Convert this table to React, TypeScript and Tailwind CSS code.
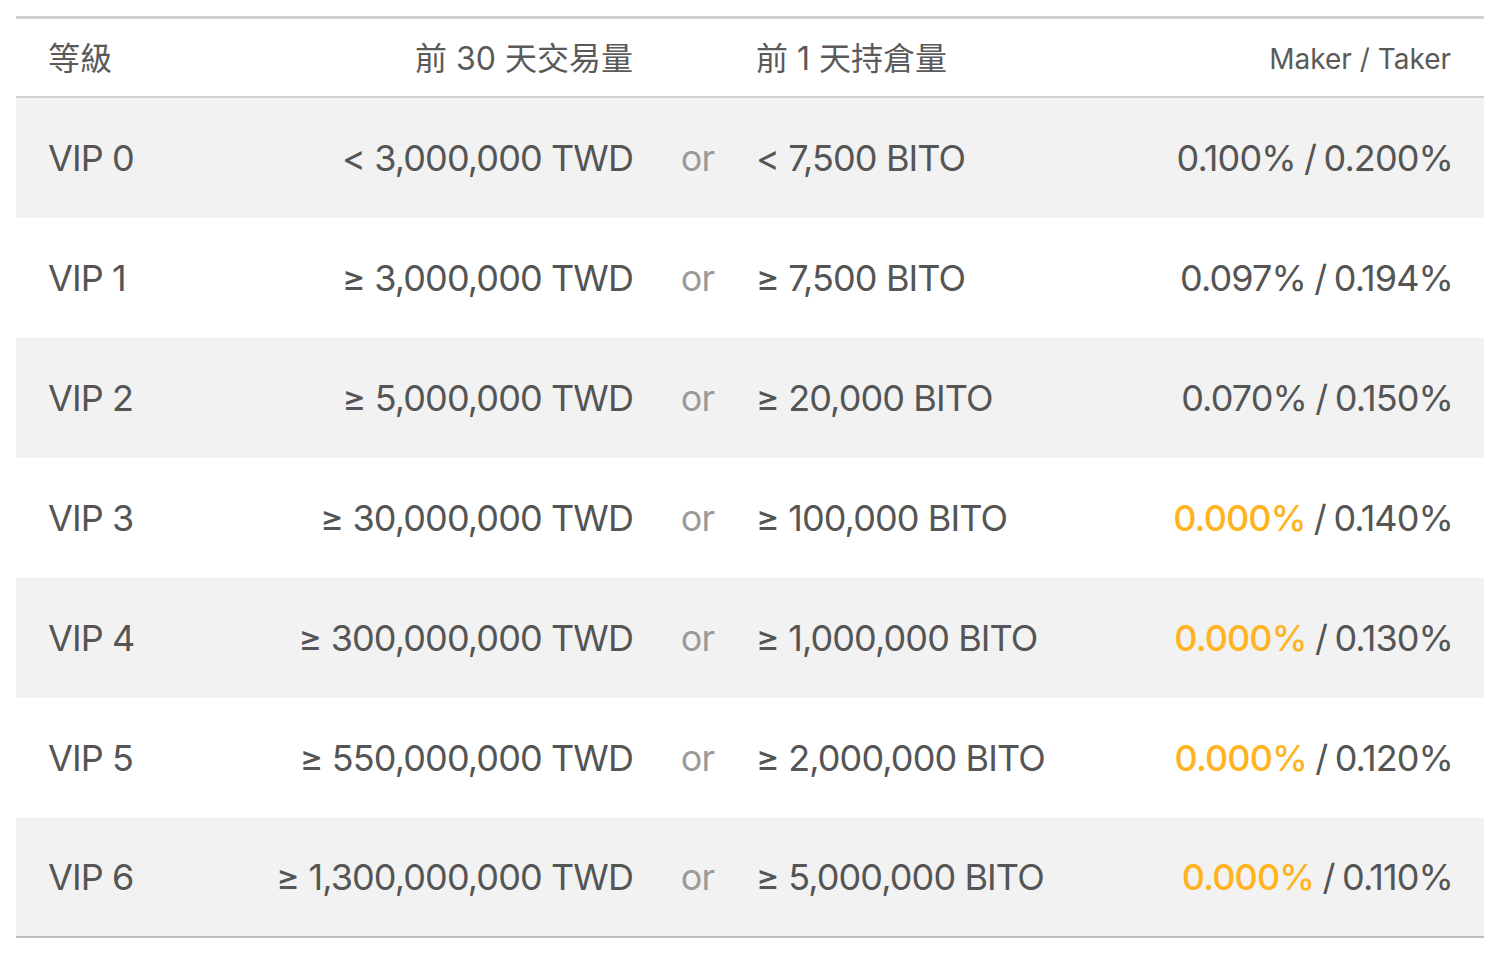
import React from "react";

const rows = [
  { lv: "VIP 0", vol: "< 3,000,000 TWD", hold: "< 7,500 BITO", maker: "0.100%", taker: "0.200%", hi: false },
  { lv: "VIP 1", vol: "≥ 3,000,000 TWD", hold: "≥ 7,500 BITO", maker: "0.097%", taker: "0.194%", hi: false },
  { lv: "VIP 2", vol: "≥ 5,000,000 TWD", hold: "≥ 20,000 BITO", maker: "0.070%", taker: "0.150%", hi: false },
  { lv: "VIP 3", vol: "≥ 30,000,000 TWD", hold: "≥ 100,000 BITO", maker: "0.000%", taker: "0.140%", hi: true },
  { lv: "VIP 4", vol: "≥ 300,000,000 TWD", hold: "≥ 1,000,000 BITO", maker: "0.000%", taker: "0.130%", hi: true },
  { lv: "VIP 5", vol: "≥ 550,000,000 TWD", hold: "≥ 2,000,000 BITO", maker: "0.000%", taker: "0.120%", hi: true },
  { lv: "VIP 6", vol: "≥ 1,300,000,000 TWD", hold: "≥ 5,000,000 BITO", maker: "0.000%", taker: "0.110%", hi: true },
];

const grid = "grid grid-cols-[180px_405px_123px_1fr_auto] items-center pl-[32px] pr-[33px]";

export default function App() {
  return (
    <div
      className="w-[1500px] h-[954px] bg-white pt-[16px] px-[16px]"
      style={{ fontFamily: 'Inter, "Noto Sans CJK TC", sans-serif' }}
    >
      <div className="border-t-[3px] border-[#d2d2d2]">
        <div className={`${grid} h-[79px] pt-[3px] border-b-2 border-[#d2d2d2] text-[28px] text-[#5a5a5a]`}>
          <div className="text-[32px]">等級</div>
          <div className="text-right text-[32px] whitespace-nowrap">前 30 天交易量</div>
          <div />
          <div className="text-[32px] whitespace-nowrap">前 1 天持倉量</div>
          <div className="text-right whitespace-nowrap">Maker / Taker</div>
        </div>
        {rows.map((r, i) => (
          <div
            key={r.lv}
            className={`${grid} h-[120px] text-[36px] tracking-[-0.025em] text-[#555555] ${
              i % 2 === 0 ? "bg-[#f2f2f2]" : "bg-white"
            } ${i === rows.length - 1 ? "border-b-2 border-[#bdbdbd]" : ""}`}
          >
            <div>{r.lv}</div>
            <div className="text-right whitespace-nowrap">{r.vol}</div>
            <div className="text-center pl-[6px] text-[#9a9a9a]">or</div>
            <div className="whitespace-nowrap">{r.hold}</div>
            <div className="text-right whitespace-nowrap -mr-[2px]">
              <span className={r.hi ? "text-[#ffb31f] font-medium" : ""}>{r.maker}</span>
              <span className="tracking-[-0.05em]">{" / "}</span>
              {r.taker}
            </div>
          </div>
        ))}
      </div>
    </div>
  );
}
